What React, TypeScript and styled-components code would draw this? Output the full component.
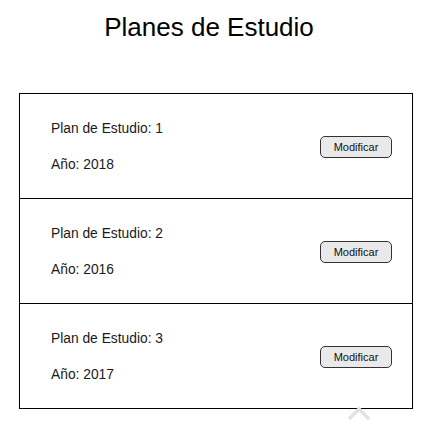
import styled, { createGlobalStyle } from "styled-components"

const Global = createGlobalStyle`
    body {
        margin: 0;
        background: #ffffff;
        font-family: "Liberation Sans", Arial, sans-serif;
        color: #111111;
    }
`

const Page = styled.div`
    position: relative;
    width: 441px;
    height: 436px;
    padding: 12px 28px 0 19px;
    box-sizing: border-box;
`

const Titulo = styled.h1`
    margin: 0 0 51px 0;
    padding-right: 14px;
    font-size: 26px;
    line-height: 30px;
    font-weight: normal;
    text-align: center;
    color: #000;
`

const Lista = styled.div`
    border: 1px solid #000;
    width: 394px;
    box-sizing: border-box;
`

const Fila = styled.div<{ $last?: boolean }>`
    display: flex;
    align-items: center;
    justify-content: space-between;
    padding: 27px 20px 25px 31px;
    border-bottom: ${p => (p.$last ? "none" : "1px solid #000")};
`

const Datos = styled.div`
    display: flex;
    flex-direction: column;
    gap: 20px;
`

const Texto = styled.span`
    font-size: 13.8px;
    line-height: 16px;
    color: #1a1a1a;
`

const Boton = styled.button`
    width: 72px;
    height: 22px;
    padding: 0;
    border: 1px solid #333;
    border-radius: 5px;
    background: #e9e9e9;
    font-family: "Liberation Sans", Arial, sans-serif;
    font-size: 11px;
    color: #111;
`

const Subir = styled.svg`
    position: absolute;
    left: 347px;
    top: 406px;
`

const planes = [
    { id: 1, anio: 2018 },
    { id: 2, anio: 2016 },
    { id: 3, anio: 2017 },
]

export default function App() {
    return <>
        <Global />
        <Page>
            <Titulo>Planes de Estudio</Titulo>
            <Lista>
                {planes.map((p, i) => (
                    <Fila key={p.id} $last={i === planes.length - 1}>
                        <Datos>
                            <Texto>Plan de Estudio: {p.id}</Texto>
                            <Texto>Año: {p.anio}</Texto>
                        </Datos>
                        <Boton>Modificar</Boton>
                    </Fila>
                ))}
            </Lista>
            <Subir width="24" height="15" viewBox="0 0 24 15">
                <path d="M2 13 L12 3 L22 13" fill="none" stroke="#e2e2e2" strokeWidth="3.5" />
            </Subir>
        </Page>
    </>
}
